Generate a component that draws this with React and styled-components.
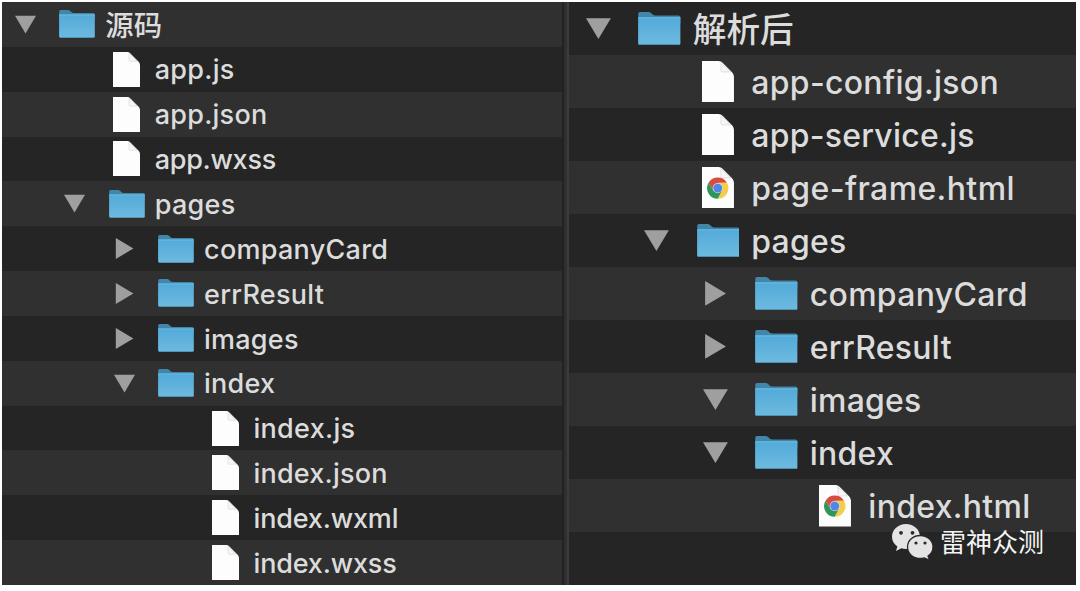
import React from 'react';
import styled, { createGlobalStyle, css } from 'styled-components';

const Global = createGlobalStyle`
  body { margin: 0; background: #fff; }
`;

const Page = styled.main`
  box-sizing: border-box;
  width: 1080px;
  height: 591px;
  padding: 2px 0 0 2px;
  display: flex;
  align-items: flex-start;
  position: relative;
  overflow: hidden;
  font-family: Inter, "Noto Sans CJK SC", sans-serif;
  color: #dcdcdc;
`;

const Panel = styled.section`
  flex: none;
  box-sizing: border-box;
  width: ${p => p.$width}px;
  height: 583px;
  overflow: hidden;
  display: flex;
  flex-direction: column;
  background: #252525;
  font-size: ${p => p.$unit}px;
`;

const Divider = styled.div`
  flex: none;
  box-sizing: border-box;
  width: 7px;
  height: 583px;
  background: #2f2f31;
  border-left: 2px solid #222224;
  border-right: 2px solid #3c3c3f;
`;

const Row = styled.div`
  flex: none;
  box-sizing: border-box;
  height: ${p => p.$height}px;
  padding-left: ${p => p.$inset + p.$depth * 4.94}em;
  display: flex;
  align-items: center;
  background: ${p => (p.$light ? '#303030' : '#252525')};
`;

const ArrowSlot = styled.span`
  flex: none;
  width: 2.1em;
  height: 2.1em;
  margin-right: 2.33em;
  display: flex;
  align-items: center;
  justify-content: center;
  svg {
    display: block;
    width: 100%;
    height: 100%;
    ${p => p.$closed && css`transform: rotate(-90deg);`}
  }
`;

const IconSlot = styled.span`
  flex: none;
  width: 3.6em;
  display: flex;
  justify-content: center;
  svg { display: block; }
`;

const Label = styled.span`
  margin-left: 1em;
  padding-top: ${p => (p.$cjk ? 0.26 : 0.28)}em;
  white-space: nowrap;
`;

const LabelText = styled.span`
  font-size: ${p => (p.$cjk ? 2.84 : 2.7)}em;
  font-weight: 500;
  letter-spacing: ${p => p.$spacing}em;
  line-height: 1.2;
`;

const FolderSvg = styled.svg`
  width: 3.6em;
  height: 2.8em;
`;

const FileSvg = styled.svg`
  width: 2.7em;
  height: 3.5em;
`;

const Watermark = styled.div`
  position: absolute;
  left: 891px;
  top: 522px;
  display: flex;
  align-items: center;
  gap: 7px;
  height: 39px;
  color: #f4f4f4;
  font-size: 26px;
  line-height: 39px;
  white-space: nowrap;
`;

const WatermarkText = styled.span`
  padding-top: 2px;
`;

const Arrow = () => (
  <svg viewBox="0 0 21 21">
    <path d="M0 1.8h21L10.5 19.4z" fill="#9f9f9f" />
  </svg>
);

const Folder = () => (
  <FolderSvg viewBox="0 0 36 28">
    <defs>
      <linearGradient id="front" x1="0" y1="0" x2="0" y2="1">
        <stop offset="0" stopColor="#52aad9" />
        <stop offset="1" stopColor="#6ebadf" />
      </linearGradient>
    </defs>
    <path d="M.2 26V1.500Q.2 0 1.700 0H9q1.200 0 2 .8l1.600 1.500q.8.7 2 .7H34.300q1.500 0 1.500 1.500V10z" fill="#4187aa" />
    <path d="M.2 4.600h35.600V26.300q0 1.700-1.700 1.700H1.900Q.2 28 .2 26.300z" fill="url(#front)" />
    <path d="M.2 5h35.600" stroke="#74c1e5" strokeWidth=".8" />
    <path d="M1 27.500h34" stroke="#4c91b3" strokeWidth=".9" />
  </FolderSvg>
);

const Chrome = () => (
  <g transform="translate(13.300 17.800)">
    <path d="M-7.800-4.500A9 9 0 0 1 7.800-4.500L0-4.300-3.700 2.100z" fill="#d64c40" />
    <path d="M7.800-4.500A9 9 0 0 1 0 9L3.700 2.100 0-4.500z" fill="#f4cd4a" />
    <path d="M0 9A9 9 0 0 1-7.800-4.500L-3.700 2.100 3.700 2.100z" fill="#30955a" />
    <circle r="4.300" fill="#c9d6ea" />
    <circle r="3.700" fill="#5484e4" />
  </g>
);

const File = ({ chrome }) => (
  <FileSvg viewBox="0 0 27 35">
    <path d="M0 0h14q2 0 3.400 1.400l7.800 7.800Q27 11 27 13v22H0z" fill="#fdfdfd" />
    <path d="M16 1.500V8q0 1.200 1.200 1.200h7z" fill="#f6f6f6" stroke="#dadada" strokeWidth=".7" />
    {chrome && <Chrome />}
  </FileSvg>
);

const WeChat = () => (
  <svg width="42" height="37" viewBox="0 0 42 37">
    <path d="M15 1C7.300 1 1 6.600 1 13.700c0 4 2 7.500 5.400 9.800L5 28l5.300-2.800c1.500.4 3 .7 4.700.7 7.700 0 14-5.200 14-12.200S22.700 1 15 1z" fill="#e4e4e4" />
    <path d="M29.200 12.500c-7 0-12.700 5-12.700 11.500S22.200 35.500 29.200 35.500c1.400 0 2.700-.2 4-.6L38.500 37 37 33c3-2 5-5.100 5-9 0-6.500-5.800-11.500-12.800-11.500z" fill="#e4e4e4" stroke="#292929" strokeWidth="1.300" />
    <g fill="#292929">
      <circle cx="10" cy="9.800" r="1.900" />
      <circle cx="21.500" cy="9.800" r="1.900" />
      <circle cx="25" cy="20" r="1.600" />
      <circle cx="34" cy="20" r="1.600" />
    </g>
  </svg>
);

const source = [
  { name: '源码', depth: 0, kind: 'open', cjk: true },
  { name: 'app.js', depth: 1, kind: 'file', spacing: 0.01 },
  { name: 'app.json', depth: 1, kind: 'file', spacing: 0.009 },
  { name: 'app.wxss', depth: 1, kind: 'file', spacing: -0.01 },
  { name: 'pages', depth: 1, kind: 'open', spacing: 0.01 },
  { name: 'companyCard', depth: 2, kind: 'closed', spacing: 0.01 },
  { name: 'errResult', depth: 2, kind: 'closed', spacing: 0.01 },
  { name: 'images', depth: 2, kind: 'closed', spacing: 0.008 },
  { name: 'index', depth: 2, kind: 'open', spacing: 0.008 },
  { name: 'index.js', depth: 3, kind: 'file', spacing: 0.011 },
  { name: 'index.json', depth: 3, kind: 'file', spacing: 0.008 },
  { name: 'index.wxml', depth: 3, kind: 'file', spacing: -0.006 },
  { name: 'index.wxss', depth: 3, kind: 'file', spacing: -0.006 },
];

const parsed = [
  { name: '解析后', depth: 0, kind: 'open', cjk: true },
  { name: 'app-config.json', depth: 1, kind: 'file', spacing: 0.01 },
  { name: 'app-service.js', depth: 1, kind: 'file', spacing: 0.008 },
  { name: 'page-frame.html', depth: 1, kind: 'chrome', spacing: 0.013 },
  { name: 'pages', depth: 1, kind: 'open', spacing: 0.008 },
  { name: 'companyCard', depth: 2, kind: 'closed', spacing: 0.01 },
  { name: 'errResult', depth: 2, kind: 'closed', spacing: 0.01 },
  { name: 'images', depth: 2, kind: 'open', spacing: 0.007 },
  { name: 'index', depth: 2, kind: 'open', spacing: 0.008 },
  { name: 'index.html', depth: 3, kind: 'chrome', spacing: 0.01 },
];

const Tree = ({ items, width, unit, rowHeight, inset, lightFirst }) => (
  <Panel $width={width} $unit={unit}>
    {items.map((item, i) => {
      const folder = item.kind === 'open' || item.kind === 'closed';
      return (
        <Row key={i} $height={rowHeight} $inset={inset} $depth={item.depth} $light={(i % 2 === 0) === lightFirst}>
          <ArrowSlot $closed={item.kind === 'closed'}>{folder && <Arrow />}</ArrowSlot>
          <IconSlot>{folder ? <Folder /> : <File chrome={item.kind === 'chrome'} />}</IconSlot>
          <Label $cjk={item.cjk}>
            <LabelText $cjk={item.cjk} $spacing={item.spacing || 0}>{item.name}</LabelText>
          </Label>
        </Row>
      );
    })}
  </Panel>
);

export default function App() {
  return (
    <>
      <Global />
      <Page>
        <Tree items={source} width={560} unit={10} rowHeight={44.85} inset={1.3} lightFirst />
        <Divider />
        <Tree items={parsed} width={507} unit={11.84} rowHeight={53.05} inset={1.43} lightFirst={false} />
        <Watermark>
          <WeChat />
          <WatermarkText>雷神众测</WatermarkText>
        </Watermark>
      </Page>
    </>
  );
}
